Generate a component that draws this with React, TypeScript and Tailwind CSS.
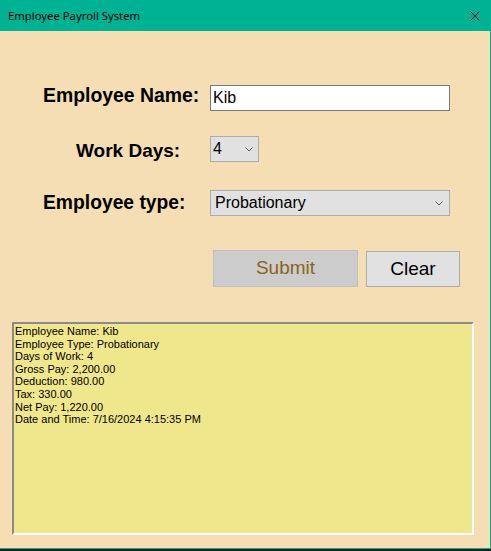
const Chevron = () => (
  <svg width="8" height="5" viewBox="0 0 8 5" className="shrink-0">
    <path d="M0.5 0.5 L4 4 L7.5 0.5" fill="none" stroke="#5f5f5f" strokeWidth="1" />
  </svg>
);

const lines = [
  "Employee Name: Kib",
  "Employee Type: Probationary",
  "Days of Work: 4",
  "Gross Pay: 2,200.00",
  "Deduction: 980.00",
  "Tax: 330.00",
  "Net Pay: 1,220.00",
  "Date and Time: 7/16/2024 4:15:35 PM",
];

const App = () => {
  return (
    <div className="w-[491px] h-[551px] flex flex-col bg-[#1c1c1c] font-['Liberation_Sans',Arial,sans-serif]">
      {/* title bar */}
      <div className="h-[31px] shrink-0 bg-[#00b294] flex items-center justify-between pl-[8px] pr-[11px]">
        <span className="text-[11.3px] text-black font-['Noto_Sans',sans-serif] leading-none">Employee Payroll System</span>
        <svg width="10" height="10" viewBox="0 0 10 10">
          <path d="M0.5 0.5 L9.5 9.5 M9.5 0.5 L0.5 9.5" stroke="#000" strokeWidth="1" />
        </svg>
      </div>

      {/* form body */}
      <div className="h-[518px] shrink-0 bg-[#f5deb3] border-r border-b border-[#00b294] flex flex-col pt-[54px]">
        <div className="flex items-center h-[26px]">
          <div className="w-[210px] pl-[43px] mb-[5px] text-[19.4px] font-bold text-black leading-none">Employee Name:</div>
          <div className="w-[240px] h-[26px] bg-white border border-[#7a7a7a] flex items-center pl-[2px] text-[16px] text-black">Kib</div>
        </div>

        <div className="flex items-center h-[26px] mt-[25px]">
          <div className="w-[210px] pl-[76px] mt-[2px] text-[19px] font-bold text-black leading-none">Work Days:</div>
          <div className="w-[49px] h-[26px] bg-[#e1e1e1] border border-[#adadad] flex items-center justify-between pl-[2px] pr-[5px] text-[16px] text-black">
            <span>4</span>
            <Chevron />
          </div>
        </div>

        <div className="flex items-center h-[26px] mt-[28px]">
          <div className="w-[210px] pl-[43px] text-[19.3px] font-bold text-black leading-none">Employee type:</div>
          <div className="w-[240px] h-[26px] bg-[#e1e1e1] border border-[#adadad] flex items-center justify-between pl-[4px] pr-[6px] text-[16px] text-black">
            <span>Probationary</span>
            <Chevron />
          </div>
        </div>

        <div className="flex items-end gap-[8px] pl-[213px] mt-[34px]">
          <div className="w-[145px] h-[37px] bg-[#cccccc] border border-[#bfbfbf] flex items-center justify-center text-[19px] text-[#8a6418]">Submit</div>
          <div className="w-[94px] h-[36px] bg-[#e1e1e1] border border-[#adadad] flex items-center justify-center text-[19px] text-black">Clear</div>
        </div>

        <div className="ml-[12px] mt-[35px] w-[462px] h-[213px] bg-[#f0e68c] border-2 border-t-[#8a8a8a] border-l-[#8a8a8a] border-r-white border-b-white pl-[1px] pt-[1px]">
          {lines.map((l) => (
            <div key={l} className="text-[11px] leading-[12.6px] text-black whitespace-nowrap">{l}</div>
          ))}
        </div>
      </div>
    </div>
  );
};

export default App;
